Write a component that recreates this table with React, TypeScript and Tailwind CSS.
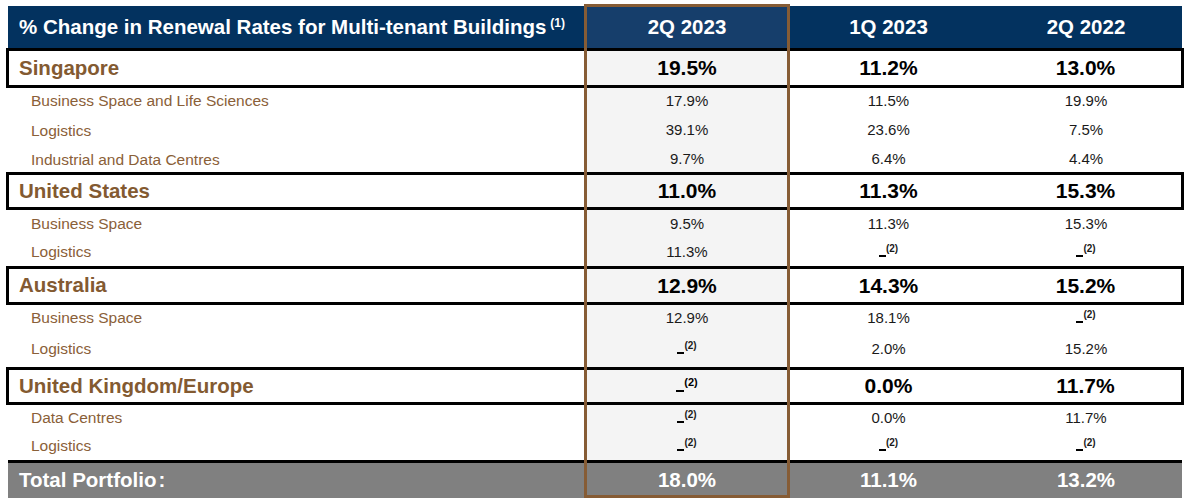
import React from "react";

const F = { fontFamily: '"Liberation Sans", Arial, sans-serif' };

const Dash = ({ big = false }: { big?: boolean }) => (
  <span className="inline-flex items-end">
    <span className={big ? "w-[8px] h-[2px] bg-black mb-[3px]" : "w-[7px] h-[2px] bg-black mb-[3px]"} />
    <span className={big ? "text-[11px] font-bold leading-none mb-[7px]" : "text-[10px] font-bold leading-none mb-[6px]"}>(2)</span>
  </span>
);

type V = string | null;

const Sub = ({ label, vals, h }: { label: string; vals: V[]; h: string }) => (
  <div className={`flex ${h} items-center text-[15px] text-[#1a1a1a]`}>
    <div className="w-[579px] pl-[23px] text-[15.5px] text-[#8a6038]">{label}</div>
    <div className="w-[200px] h-full flex items-center justify-center bg-[#f4f4f4]">
      {vals[0] ?? <Dash />}
    </div>
    <div className="w-[203px] flex justify-center">{vals[1] ?? <Dash />}</div>
    <div className="w-[192px] flex justify-center">{vals[2] ?? <Dash />}</div>
  </div>
);

const Box = ({ label, vals, h }: { label: string; vals: V[]; h: string }) => (
  <div className={`-mx-[2px] flex ${h} border-[3px] border-black items-stretch text-[21px] font-bold text-black`}>
    <div className="w-[578px] pl-[10px] flex items-center text-[20.5px] text-[#835a31]">{label}</div>
    <div className="w-[200px] flex items-center justify-center bg-[#f4f4f4]">
      {vals[0] ?? <Dash big />}
    </div>
    <div className="w-[203px] flex items-center justify-center">{vals[1] ?? <Dash big />}</div>
    <div className="w-[191px] flex items-center justify-center">{vals[2] ?? <Dash big />}</div>
  </div>
);

export default function App() {
  return (
    <div className="relative w-[1192px] h-[498px] bg-white overflow-hidden" style={F}>
      <div className="pl-[8px] pt-[6px] w-[1182px]">
        <div className="flex h-[42px] bg-[#03325f] text-white text-[20.5px] font-bold items-stretch">
          <div className="w-[579px] pl-[11px] flex items-center">
            % Change in Renewal Rates for Multi-tenant Buildings
            <span className="text-[12px] ml-[4px] -mt-[8px]">(1)</span>
          </div>
          <div className="w-[200px] flex items-center justify-center bg-[#163e6b]">2Q 2023</div>
          <div className="w-[203px] flex items-center justify-center">1Q 2023</div>
          <div className="w-[192px] flex items-center justify-center">2Q 2022</div>
        </div>
        <Box label="Singapore" vals={["19.5%", "11.2%", "13.0%"]} h="h-[40px]" />
        <Sub label="Business Space and Life Sciences" vals={["17.9%", "11.5%", "19.9%"]} h="h-[26px]" />
        <Sub label="Logistics" vals={["39.1%", "23.6%", "7.5%"]} h="h-[33px]" />
        <Sub label="Industrial and Data Centres" vals={["9.7%", "6.4%", "4.4%"]} h="h-[25px]" />
        <Box label="United States" vals={["11.0%", "11.3%", "15.3%"]} h="h-[38px]" />
        <Sub label="Business Space" vals={["9.5%", "11.3%", "15.3%"]} h="h-[28px]" />
        <Sub label="Logistics" vals={["11.3%", null, null]} h="h-[28px]" />
        <Box label="Australia" vals={["12.9%", "14.3%", "15.2%"]} h="h-[39px]" />
        <Sub label="Business Space" vals={["12.9%", "18.1%", null]} h="h-[26px]" />
        <Sub label="Logistics" vals={[null, "2.0%", "15.2%"]} h="h-[36px]" />
        <Box label="United Kingdom/Europe" vals={[null, "0.0%", "11.7%"]} h="h-[38px]" />
        <Sub label="Data Centres" vals={[null, "0.0%", "11.7%"]} h="h-[26px]" />
        <Sub label="Logistics" vals={[null, null, null]} h="h-[29px]" />
        <div className="h-[3px] bg-black" />
        <div className="flex h-[35px] bg-[#808080] text-white text-[20.5px] font-bold items-center">
          <div className="w-[579px] pl-[11px]">Total Portfolio<span className="ml-[2px]">:</span></div>
          <div className="w-[200px] flex justify-center">18.0%</div>
          <div className="w-[203px] flex justify-center">11.1%</div>
          <div className="w-[192px] flex justify-center">13.2%</div>
        </div>
      </div>
      <div className="absolute left-[584px] top-[4px] w-[206px] h-[494px] border-[3px] border-[#865c35] pointer-events-none" />
    </div>
  );
}
